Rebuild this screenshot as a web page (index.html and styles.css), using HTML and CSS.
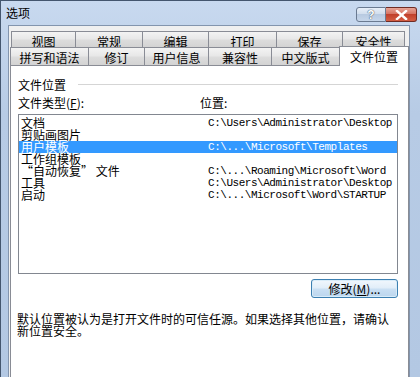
FILE: index.html
```html
<!DOCTYPE html>
<html lang="zh-CN">
<head>
    <meta charset="UTF-8">
    <title>选项</title>
    <link rel="stylesheet" href="styles.css">
</head>
<body>
    <div class="window">
        <div class="titlebar">
            <span class="title">选项</span>
            <div class="caption-buttons">
                <span class="cap-btn help">?</span>
                <span class="cap-btn close">
                    <svg width="13" height="10" viewBox="0 0 13 10">
                        <path d="M2 1 L11 9 M11 1 L2 9" stroke="#fff" stroke-width="2.4" stroke-linecap="square"/>
                    </svg>
                </span>
            </div>
        </div>

        <div class="client">
            <div class="tabs">
                <div class="tab-row row1">
                    <div class="tab">视图</div>
                    <div class="tab">常规</div>
                    <div class="tab">编辑</div>
                    <div class="tab">打印</div>
                    <div class="tab">保存</div>
                    <div class="tab">安全性</div>
                </div>
                <div class="tab-row row2">
                    <div class="tab">拼写和语法</div>
                    <div class="tab">修订</div>
                    <div class="tab">用户信息</div>
                    <div class="tab">兼容性</div>
                    <div class="tab">中文版式</div>
                    <div class="tab active">文件位置</div>
                </div>
            </div>

            <div class="panel">
                <div class="group-title">
                    <span>文件位置</span>
                    <i class="groove"></i>
                </div>
                <div class="list-head">
                    <span>文件类型(<u>F</u>):</span>
                    <span>位置:</span>
                </div>
                <div class="listbox">
                    <div class="item"><span>文档</span><span class="path">C:\Users\Administrator\Desktop</span></div>
                    <div class="item"><span>剪贴画图片</span><span class="path"></span></div>
                    <div class="item selected"><span>用户模板</span><span class="path">C:\...\Microsoft\Templates</span></div>
                    <div class="item"><span>工作组模板</span><span class="path"></span></div>
                    <div class="item"><span>“自动恢复” 文件</span><span class="path">C:\...\Roaming\Microsoft\Word</span></div>
                    <div class="item"><span>工具</span><span class="path">C:\Users\Administrator\Desktop</span></div>
                    <div class="item"><span>启动</span><span class="path">C:\...\Microsoft\Word\STARTUP</span></div>
                </div>
                <div class="actions">
                    <button class="btn">修改(<u>M</u>)...</button>
                </div>
                <p class="note">默认位置被认为是打开文件时的可信任源。如果选择其他位置，请确认新位置安全。</p>
            </div>
        </div>
    </div>
</body>
</html>
```

FILE: styles.css
```css
body {
    margin: 0;
    font-family: "Noto Sans CJK SC", "Liberation Sans", sans-serif;
    font-size: 12px;
    color: #000;
}
.window {
    width: 420px;
    height: 377px;
    box-sizing: border-box;
    overflow: hidden;
    display: flex;
    flex-direction: column;
    padding: 0 10px 0 7px;
    border-left: 1px solid #44566e;
    border-top: 1px solid #44566e;
    background: linear-gradient(#c8d9ef, #b7cbe5 30%, #b3c8e3);
}
.titlebar {
    height: 24px;
    flex: none;
    display: flex;
    justify-content: space-between;
}
.title {
    line-height: 12px;
    padding-top: 6px;
    margin-left: -2px;
}
.caption-buttons {
    display: flex;
    margin-top: 6px;
    margin-right: -7px;
}
.cap-btn {
    height: 15px;
    box-sizing: border-box;
    display: flex;
    align-items: center;
    justify-content: center;
    border: 1px solid #6a7a91;
}
.help {
    width: 30px;
    border-radius: 3px 0 0 3px;
    background: linear-gradient(#e8eff8, #cfdcec 50%, #b8cae1 50%, #c6d6ea);
    color: #fff;
    font-family: "Liberation Sans", sans-serif;
    font-weight: bold;
    font-size: 12px;
    text-shadow: 0 0 1px #3a4a60, 0 0 1px #3a4a60;
}
.close {
    width: 31px;
    border-color: #6e2b24;
    border-left: none;
    border-radius: 0 3px 3px 0;
    background: linear-gradient(#e7a597, #d46e5d 50%, #c1412c 50%, #d35e44);
}
.client {
    flex: 1;
    background: #f0f0f0;
    border: 1px solid #8395ae;
    border-bottom: none;
    padding: 5px 0 0 1px;
}
.tab-row {
    display: flex;
}
.row1 {
    height: 16px;
    margin-left: 1px;
}
.row2 {
    height: 18px;
    align-items: flex-end;
}
.tab {
    box-sizing: border-box;
    height: 100%;
    padding-top: 4px;
    line-height: 12px;
    text-align: center;
    white-space: nowrap;
    border: 1px solid #898c95;
    border-left: none;
    border-bottom: none;
    background: linear-gradient(#f3f3f3, #e8e8e8 45%, #dcdcdc 55%, #d3d3d3);
}
.tab:first-child {
    border-left: 1px solid #898c95;
}
.row1 .tab:nth-child(1) { width: 65px; }
.row1 .tab:nth-child(2) { width: 67px; }
.row1 .tab:nth-child(3) { width: 66px; }
.row1 .tab:nth-child(4) { width: 68px; }
.row1 .tab:nth-child(5) { width: 66px; }
.row1 .tab:nth-child(6) { width: 62px; }
.row2 .tab:nth-child(1) { width: 79px; }
.row2 .tab:nth-child(2) { width: 56px; }
.row2 .tab:nth-child(3) { width: 64px; }
.row2 .tab:nth-child(4) { width: 63px; }
.row2 .tab:nth-child(5) { width: 68px; }
.tab.active {
    flex: 1;
    height: 20px;
    margin-bottom: -1px;
    position: relative;
    z-index: 1;
    background: #fff;
    border-left: 1px solid #898c95;
    margin-left: -1px;
}
.panel {
    height: 320px;
    box-sizing: border-box;
    background: #fff;
    border: 1px solid #898c95;
    padding: 13px 10px 0 7px;
}
.group-title {
    display: flex;
    align-items: center;
    line-height: 12px;
}
.groove {
    flex: 1;
    margin-left: 12px;
    border-top: 1px solid #d5d5d5;
    border-bottom: 1px solid #fff;
}
.list-head {
    display: grid;
    grid-template-columns: 182px 1fr;
    line-height: 12px;
    margin-top: 6px;
}
.listbox {
    height: 160px;
    box-sizing: border-box;
    margin-top: 5px;
    border: 1px solid #828790;
    padding: 2px 0;
}
.item {
    display: grid;
    grid-template-columns: 187px 1fr;
    height: 12px;
    line-height: 12px;
    padding-left: 2px;
    white-space: nowrap;
}
.item.selected {
    background: #3399ff;
    color: #fff;
}
.path {
    font-family: "Liberation Mono", monospace;
    font-size: 11px;
    letter-spacing: -0.47px;
}
.actions {
    display: flex;
    justify-content: flex-end;
    margin-top: 5px;
}
.btn {
    width: 87px;
    height: 19px;
    padding: 0;
    font: inherit;
    line-height: 12px;
    color: #000;
    border: 1px solid #3c7fb1;
    border-radius: 3px;
    background: linear-gradient(#f1f7fd, #e2eef9 45%, #c9dff3 55%, #bcd6ee);
    box-shadow: inset 0 0 0 1px #d8ecf9;
}
.note {
    margin: 15px 0 0 -1px;
    line-height: 12px;
}
```
